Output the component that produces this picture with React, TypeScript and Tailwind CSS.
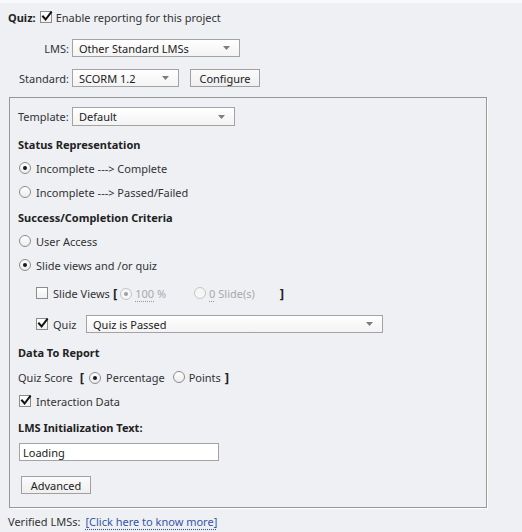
import React from "react";

const Check = ({ checked }: { checked: boolean }) => (
  <span className="relative inline-block w-[12px] h-[12px] border border-[#8c8c8c] bg-gradient-to-b from-[#ffffff] to-[#f0f0f0] shrink-0">
    {checked && (
      <svg className="absolute left-[0px] top-[-1px]" width="12" height="12" viewBox="0 0 12 12">
        <path d="M2 5.5 L4.6 8.5 L10 1.5" fill="none" stroke="#111" strokeWidth="2" strokeLinecap="square" />
      </svg>
    )}
  </span>
);

const Radio = ({ on, disabled }: { on: boolean; disabled?: boolean }) => (
  <span
    className={
      "relative inline-flex items-center justify-center w-[12px] h-[12px] rounded-full border shrink-0 " +
      (disabled ? "border-[#c4c4c4] bg-[#f6f6f6]" : "border-[#8c8c8c] bg-gradient-to-b from-[#ffffff] to-[#ececec]")
    }
  >
    {on && <span className={"w-[4px] h-[4px] rounded-full " + (disabled ? "bg-[#a0a0a0]" : "bg-[#1a1a1a]")} />}
  </span>
);

const Arrow = () => (
  <svg width="7" height="4" viewBox="0 0 7 4">
    <path d="M0 0 L7 0 L3.5 4 Z" fill="#7d7d7d" />
  </svg>
);

const Select = ({ text, w, h = 18 }: { text: string; w: string; h?: number }) => (
  <div
    className={
      "flex items-center justify-between border border-[#a3a3a3] bg-gradient-to-b from-[#ffffff] to-[#f3f3f3] pl-[6px] pr-[9px] " +
      w
    }
    style={{ height: h }}
  >
    <span className="text-[#222]">{text}</span>
    <Arrow />
  </div>
);

const Button = ({ text, w }: { text: string; w: string }) => (
  <div
    className={
      "flex items-center justify-center h-[18px] border border-[#a0a0a0] bg-gradient-to-b from-[#fbfbfb] to-[#efefef] text-[#222] " +
      w
    }
  >
    {text}
  </div>
);

export default function App() {
  return (
    <div className="w-[522px] h-[532px] overflow-hidden bg-[#eef0f4] border-t-[3px] border-[#f8f9fa] text-[11px] leading-none text-[#333] font-['Noto_Sans','DejaVu_Sans',sans-serif]">
      <div className="pt-[4px] pl-[8px] h-[24px] flex items-center gap-[4px] mt-[0px]">
        <span className="font-bold text-[#222]">Quiz:</span>
        <Check checked />
        <span className="ml-[0px]">Enable reporting for this project</span>
      </div>
      <div className="mt-[12px] flex items-center h-[18px]">
        <span className="w-[69px] text-right pr-[0px]">LMS:</span>
        <span className="ml-[3px]">
          <Select text="Other Standard LMSs" w="w-[168px]" />
        </span>
      </div>
      <div className="mt-[12px] flex items-center h-[18px]">
        <span className="w-[69px] text-right">Standard:</span>
        <span className="ml-[3px]">
          <Select text="SCORM 1.2" w="w-[107px]" />
        </span>
        <span className="ml-[11px]">
          <Button text="Configure" w="w-[70px]" />
        </span>
      </div>

      <div className="mt-[10px] ml-[9px] w-[478px] h-[411px] border border-[#979797] shadow-[1px_1px_0_#ffffff] pl-[8px] pt-[9px]">
        <div className="flex items-center h-[19px]">
          <span className="w-[54px]">Template:</span>
          <Select text="Default" w="w-[163px]" h={19} />
        </div>

        <div className="mt-[8px] h-[20px] flex items-center font-bold text-[#222]">Status Representation</div>
        <div className="mt-[4px] h-[20px] flex items-center gap-[5px] pl-[1px]">
          <Radio on />
          <span>Incomplete ---&gt; Complete</span>
        </div>
        <div className="mt-[4px] h-[20px] flex items-center gap-[5px] pl-[1px]">
          <Radio on={false} />
          <span>Incomplete ---&gt; Passed/Failed</span>
        </div>

        <div className="mt-[5px] h-[20px] flex items-center font-bold text-[#222]">Success/Completion Criteria</div>
        <div className="mt-[4px] h-[20px] flex items-center gap-[5px] pl-[1px]">
          <Radio on={false} />
          <span>User Access</span>
        </div>
        <div className="mt-[4px] h-[20px] flex items-center gap-[5px] pl-[1px]">
          <Radio on />
          <span>Slide views and /or quiz</span>
        </div>

        <div className="mt-[8px] h-[20px] flex items-center pl-[18px]">
          <Check checked={false} />
          <span className="ml-[5px]">Slide Views</span>
          <span className="ml-[3px] font-bold text-[13px] text-[#222]">[</span>
          <span className="ml-[3px]">
            <Radio on disabled />
          </span>
          <span className="ml-[3px] text-[#a9a9a9]">
            <span className="underline decoration-dotted decoration-[#9a9a9a] underline-offset-[3px]">100</span> %
          </span>
          <span className="ml-[28px]">
            <Radio on={false} disabled />
          </span>
          <span className="ml-[3px] text-[#a9a9a9]">
            <span className="underline decoration-dotted decoration-[#9a9a9a] underline-offset-[3px]">0</span> Slide(s)
          </span>
          <span className="ml-[25px] font-bold text-[13px] text-[#222]">]</span>
        </div>
        <div className="mt-[11px] h-[20px] flex items-center pl-[18px]">
          <Check checked />
          <span className="ml-[5px] w-[33px]">Quiz</span>
          <Select text="Quiz is Passed" w="w-[297px]" />
        </div>

        <div className="mt-[8px] h-[20px] flex items-center font-bold text-[#222]">Data To Report</div>
        <div className="mt-[5px] h-[20px] flex items-center">
          <span>Quiz Score</span>
          <span className="ml-[7px] font-bold text-[13px] text-[#222]">[</span>
          <span className="ml-[5px]">
            <Radio on />
          </span>
          <span className="ml-[5px]">Percentage</span>
          <span className="ml-[8px]">
            <Radio on={false} />
          </span>
          <span className="ml-[4px]">Points</span>
          <span className="ml-[4px] font-bold text-[13px] text-[#222]">]</span>
        </div>
        <div className="mt-[4px] h-[20px] flex items-center gap-[5px] pl-[1px]">
          <Check checked />
          <span>Interaction Data</span>
        </div>

        <div className="mt-[6px] h-[20px] flex items-center font-bold text-[#222]">LMS Initialization Text:</div>
        <div className="mt-[6px] ml-[1px] w-[200px] h-[18px] border border-[#a3a3a3] bg-white flex items-center pl-[3px] text-[#222]">
          Loading
        </div>
        <div className="mt-[15px] ml-[3px]">
          <Button text="Advanced" w="w-[70px]" />
        </div>
      </div>

      <div className="mt-[3px] h-[20px] pl-[8px] flex items-center">
        <span>Verified LMSs:</span>
        <span className="ml-[5px] text-[#3556a6] underline decoration-dotted decoration-[#3556a6] underline-offset-[3px]">
          [Click here to know more]
        </span>
      </div>
    </div>
  );
}
